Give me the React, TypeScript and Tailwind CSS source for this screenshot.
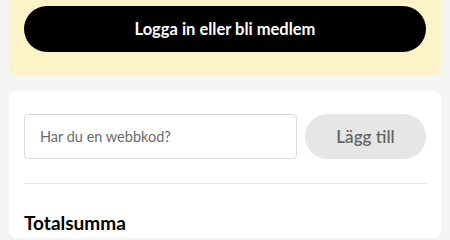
export default function App() {
  return (
    <div
      className="min-h-[240px] w-[450px] overflow-hidden bg-[#f3f4f4] px-[9px]"
      style={{ fontFamily: "'Source Sans Pro', Lato, 'Noto Sans', sans-serif" }}
    >
      <section className="-mt-[20px] rounded-b-[8px] bg-[#fdf3c8] px-[15px] pb-[23px] pt-[26px]">
        <button className="flex h-[46px] w-full items-center justify-center rounded-full bg-black text-[16.5px] font-bold text-white">
          Logga in eller bli medlem
        </button>
      </section>
      <section className="mt-[16px] rounded-[8px] bg-white px-[15px] pt-[23px]">
        <div className="flex gap-[8px]">
          <div className="flex h-[45px] flex-1 items-center rounded-[4px] border border-[#dcdcdc] px-[15px] text-[14.5px] text-[#6b6b6b]">
            Har du en webbkod?
          </div>
          <button className="h-[45px] w-[121px] rounded-full bg-[#e6e6e6] text-[17px] font-semibold text-[#666]">
            Lägg till
          </button>
        </div>
        <div className="mt-[24px] h-px bg-[#e6e6e6]" />
        <h2 className="pt-[25px] text-[19px] font-bold text-black">Totalsumma</h2>
      </section>
    </div>
  )
}
